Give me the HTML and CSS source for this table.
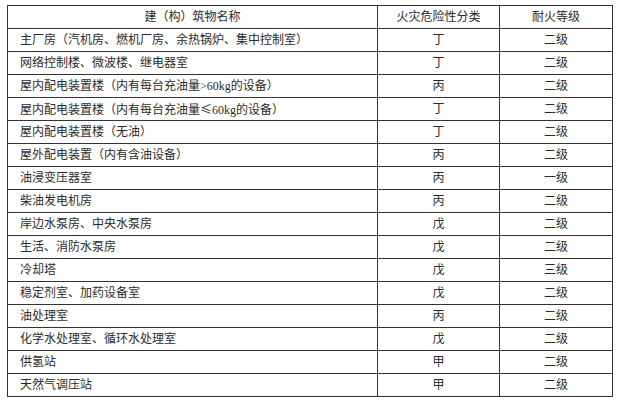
FILE: index.html
```html
<!DOCTYPE html>
<html lang="zh-CN">
<head>
<meta charset="utf-8">
<title>建（构）筑物火灾危险性分类</title>
<link rel="stylesheet" href="styles.css">
</head>
<body>
<div class="page">
<table class="fire-table">
  <colgroup>
    <col class="c-name">
    <col class="c-cat">
    <col class="c-grade">
  </colgroup>
  <thead>
    <tr><th class="name">建（构）筑物名称</th><th>火灾危险性分类</th><th>耐火等级</th></tr>
  </thead>
  <tbody>
    <tr><td class="name">主厂房（汽机房、燃机厂房、余热锅炉、集中控制室）</td><td>丁</td><td>二级</td></tr>
    <tr><td class="name">网络控制楼、微波楼、继电器室</td><td>丁</td><td>二级</td></tr>
    <tr><td class="name">屋内配电装置楼（内有每台充油量&gt;60kg的设备）</td><td>丙</td><td>二级</td></tr>
    <tr><td class="name">屋内配电装置楼（内有每台充油量<span class="sym">≤</span>60kg的设备）</td><td>丁</td><td>二级</td></tr>
    <tr><td class="name">屋内配电装置楼（无油）</td><td>丁</td><td>二级</td></tr>
    <tr><td class="name">屋外配电装置（内有含油设备）</td><td>丙</td><td>二级</td></tr>
    <tr><td class="name">油浸变压器室</td><td>丙</td><td>一级</td></tr>
    <tr><td class="name">柴油发电机房</td><td>丙</td><td>二级</td></tr>
    <tr><td class="name">岸边水泵房、中央水泵房</td><td>戊</td><td>二级</td></tr>
    <tr><td class="name">生活、消防水泵房</td><td>戊</td><td>二级</td></tr>
    <tr><td class="name">冷却塔</td><td>戊</td><td>三级</td></tr>
    <tr><td class="name">稳定剂室、加药设备室</td><td>戊</td><td>二级</td></tr>
    <tr><td class="name">油处理室</td><td>丙</td><td>二级</td></tr>
    <tr><td class="name">化学水处理室、循环水处理室</td><td>戊</td><td>二级</td></tr>
    <tr><td class="name">供氢站</td><td>甲</td><td>二级</td></tr>
    <tr><td class="name">天然气调压站</td><td>甲</td><td>二级</td></tr>
  </tbody>
</table>
</div>
</body>
</html>
```
FILE: styles.css
```css
html, body {
  margin: 0;
  padding: 0;
  background: #ffffff;
}

.page {
  padding: 5px 0 0 7px;
}

.fire-table {
  border-collapse: collapse;
  width: 605px;
  table-layout: fixed;
  font-family: "Liberation Serif", "Noto Sans CJK SC", serif;
  font-size: 12px;
  color: #2b2b2b;
}

.c-name { width: 370px; }
.c-cat { width: 122px; }
.c-grade { width: 113px; }

.fire-table tr {
  height: 23px;
}

.fire-table th,
.fire-table td {
  border: 1px solid #333333;
  padding: 0;
  text-align: center;
  vertical-align: middle;
  font-weight: normal;
  line-height: 14px;
  white-space: nowrap;
}

.fire-table td.name {
  text-align: left;
  padding-left: 12px;
}

.fire-table th.name {
  text-align: center;
}

.sym {
  font-family: "Noto Sans CJK SC", sans-serif;
}
```
